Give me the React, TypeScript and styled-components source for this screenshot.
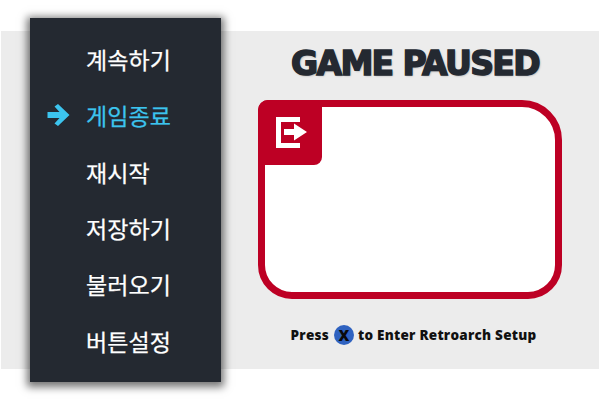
import React from 'react';
import styled, { createGlobalStyle } from 'styled-components';

const GlobalStyle = createGlobalStyle`
  html, body {
    margin: 0;
    background: #ffffff;
    overflow: hidden;
  }
`;

const Screen = styled.div`
  width: 600px;
  height: 400px;
  padding: 31px 1px;
  box-sizing: border-box;
`;

const Panel = styled.div`
  height: 338px;
  background: #ececec;
  display: flex;
  padding-left: 29px;
`;

const Menu = styled.ul`
  width: 191px;
  height: 364px;
  margin: -13px 0 0;
  padding: 13px 0 0;
  box-sizing: border-box;
  list-style: none;
  background: #242931;
  box-shadow: 0 2px 8px 3px rgba(0, 0, 0, 0.55);
  display: flex;
  flex-direction: column;
  flex-shrink: 0;
`;

const MenuItem = styled.li<{ $active?: boolean }>`
  height: 56.3px;
  display: flex;
  align-items: center;
  padding-left: 17px;
  gap: 16px;
  font-family: 'Noto Sans CJK KR', sans-serif;
  font-size: 23px;
  letter-spacing: 0.1px;
  color: ${({ $active }) => ($active ? '#3cc4ee' : '#ffffff')};
  -webkit-text-stroke: 0.25px currentColor;
`;

const Pointer = styled.span<{ $visible?: boolean }>`
  width: 23px;
  height: 22px;
  display: flex;
  color: #3cc4ee;
  visibility: ${({ $visible }) => ($visible ? 'visible' : 'hidden')};
`;

const Content = styled.main`
  width: 304px;
  margin-left: 37px;
  display: flex;
  flex-direction: column;
  align-items: center;
`;

const Title = styled.h1`
  margin: 12px 0 0 10px;
  height: 57px;
  line-height: 42px;
  font-family: 'DejaVu Sans', sans-serif;
  font-weight: 700;
  font-size: 33px;
  letter-spacing: -1.6px;
  white-space: nowrap;
  color: #242931;
  -webkit-text-stroke: 1.5px #242931;
  text-shadow: 1px 1px 2px rgba(0, 0, 0, 0.3);
`;

const Card = styled.section`
  position: relative;
  width: 304px;
  height: 199px;
  box-sizing: border-box;
  background: #ffffff;
  border: 7px solid #bd0024;
  border-radius: 10px 40px 34px 34px;
`;

const CornerTab = styled.div`
  position: absolute;
  top: -7px;
  left: -7px;
  width: 64px;
  height: 65px;
  padding: 17px 0 0 18px;
  box-sizing: border-box;
  background: #bd0024;
  border-radius: 10px 0 8px 0;
`;

const Hint = styled.p`
  margin: 26px 0 0 7px;
  display: flex;
  align-items: center;
  gap: 5px;
  font-family: 'Open Sans', sans-serif;
  font-weight: 800;
  font-size: 13.5px;
  letter-spacing: 0.25px;
  white-space: nowrap;
  color: #111111;
`;

const ButtonBadge = styled.span`
  width: 20px;
  height: 20px;
  margin-right: -1px;
  border-radius: 50%;
  background: #2f62c0;
  display: flex;
  align-items: center;
  justify-content: center;
  font-size: 15px;
  color: #0a0a0a;
`;

const ArrowIcon = () => (
  <svg width="23" height="22" viewBox="0 0 22 22" fill="currentColor">
    <path d="M0 8H12L7 2.5L10.5 0L22 11L10.5 22L7 19.5L12 14H0Z" />
  </svg>
);

const ExitIcon = () => (
  <svg width="31" height="31" viewBox="0 0 31 31" fill="#ffffff" style={{ display: 'block' }}>
    <path d="M0 0H24V5H5V26H24V31H0Z" />
    <path d="M8 12H18V6.5L31 15L18 23.5V18H8Z" />
  </svg>
);

const items = ['계속하기', '게임종료', '재시작', '저장하기', '불러오기', '버튼설정'];

export default function App() {
  return (
    <Screen>
      <GlobalStyle />
      <Panel>
        <Menu>
          {items.map((label, i) => (
            <MenuItem key={label} $active={i === 1}>
              <Pointer $visible={i === 1}>
                <ArrowIcon />
              </Pointer>
              {label}
            </MenuItem>
          ))}
        </Menu>
        <Content>
          <Title>GAME PAUSED</Title>
          <Card>
            <CornerTab>
              <ExitIcon />
            </CornerTab>
          </Card>
          <Hint>
            Press <ButtonBadge>X</ButtonBadge> to Enter Retroarch Setup
          </Hint>
        </Content>
      </Panel>
    </Screen>
  );
}
